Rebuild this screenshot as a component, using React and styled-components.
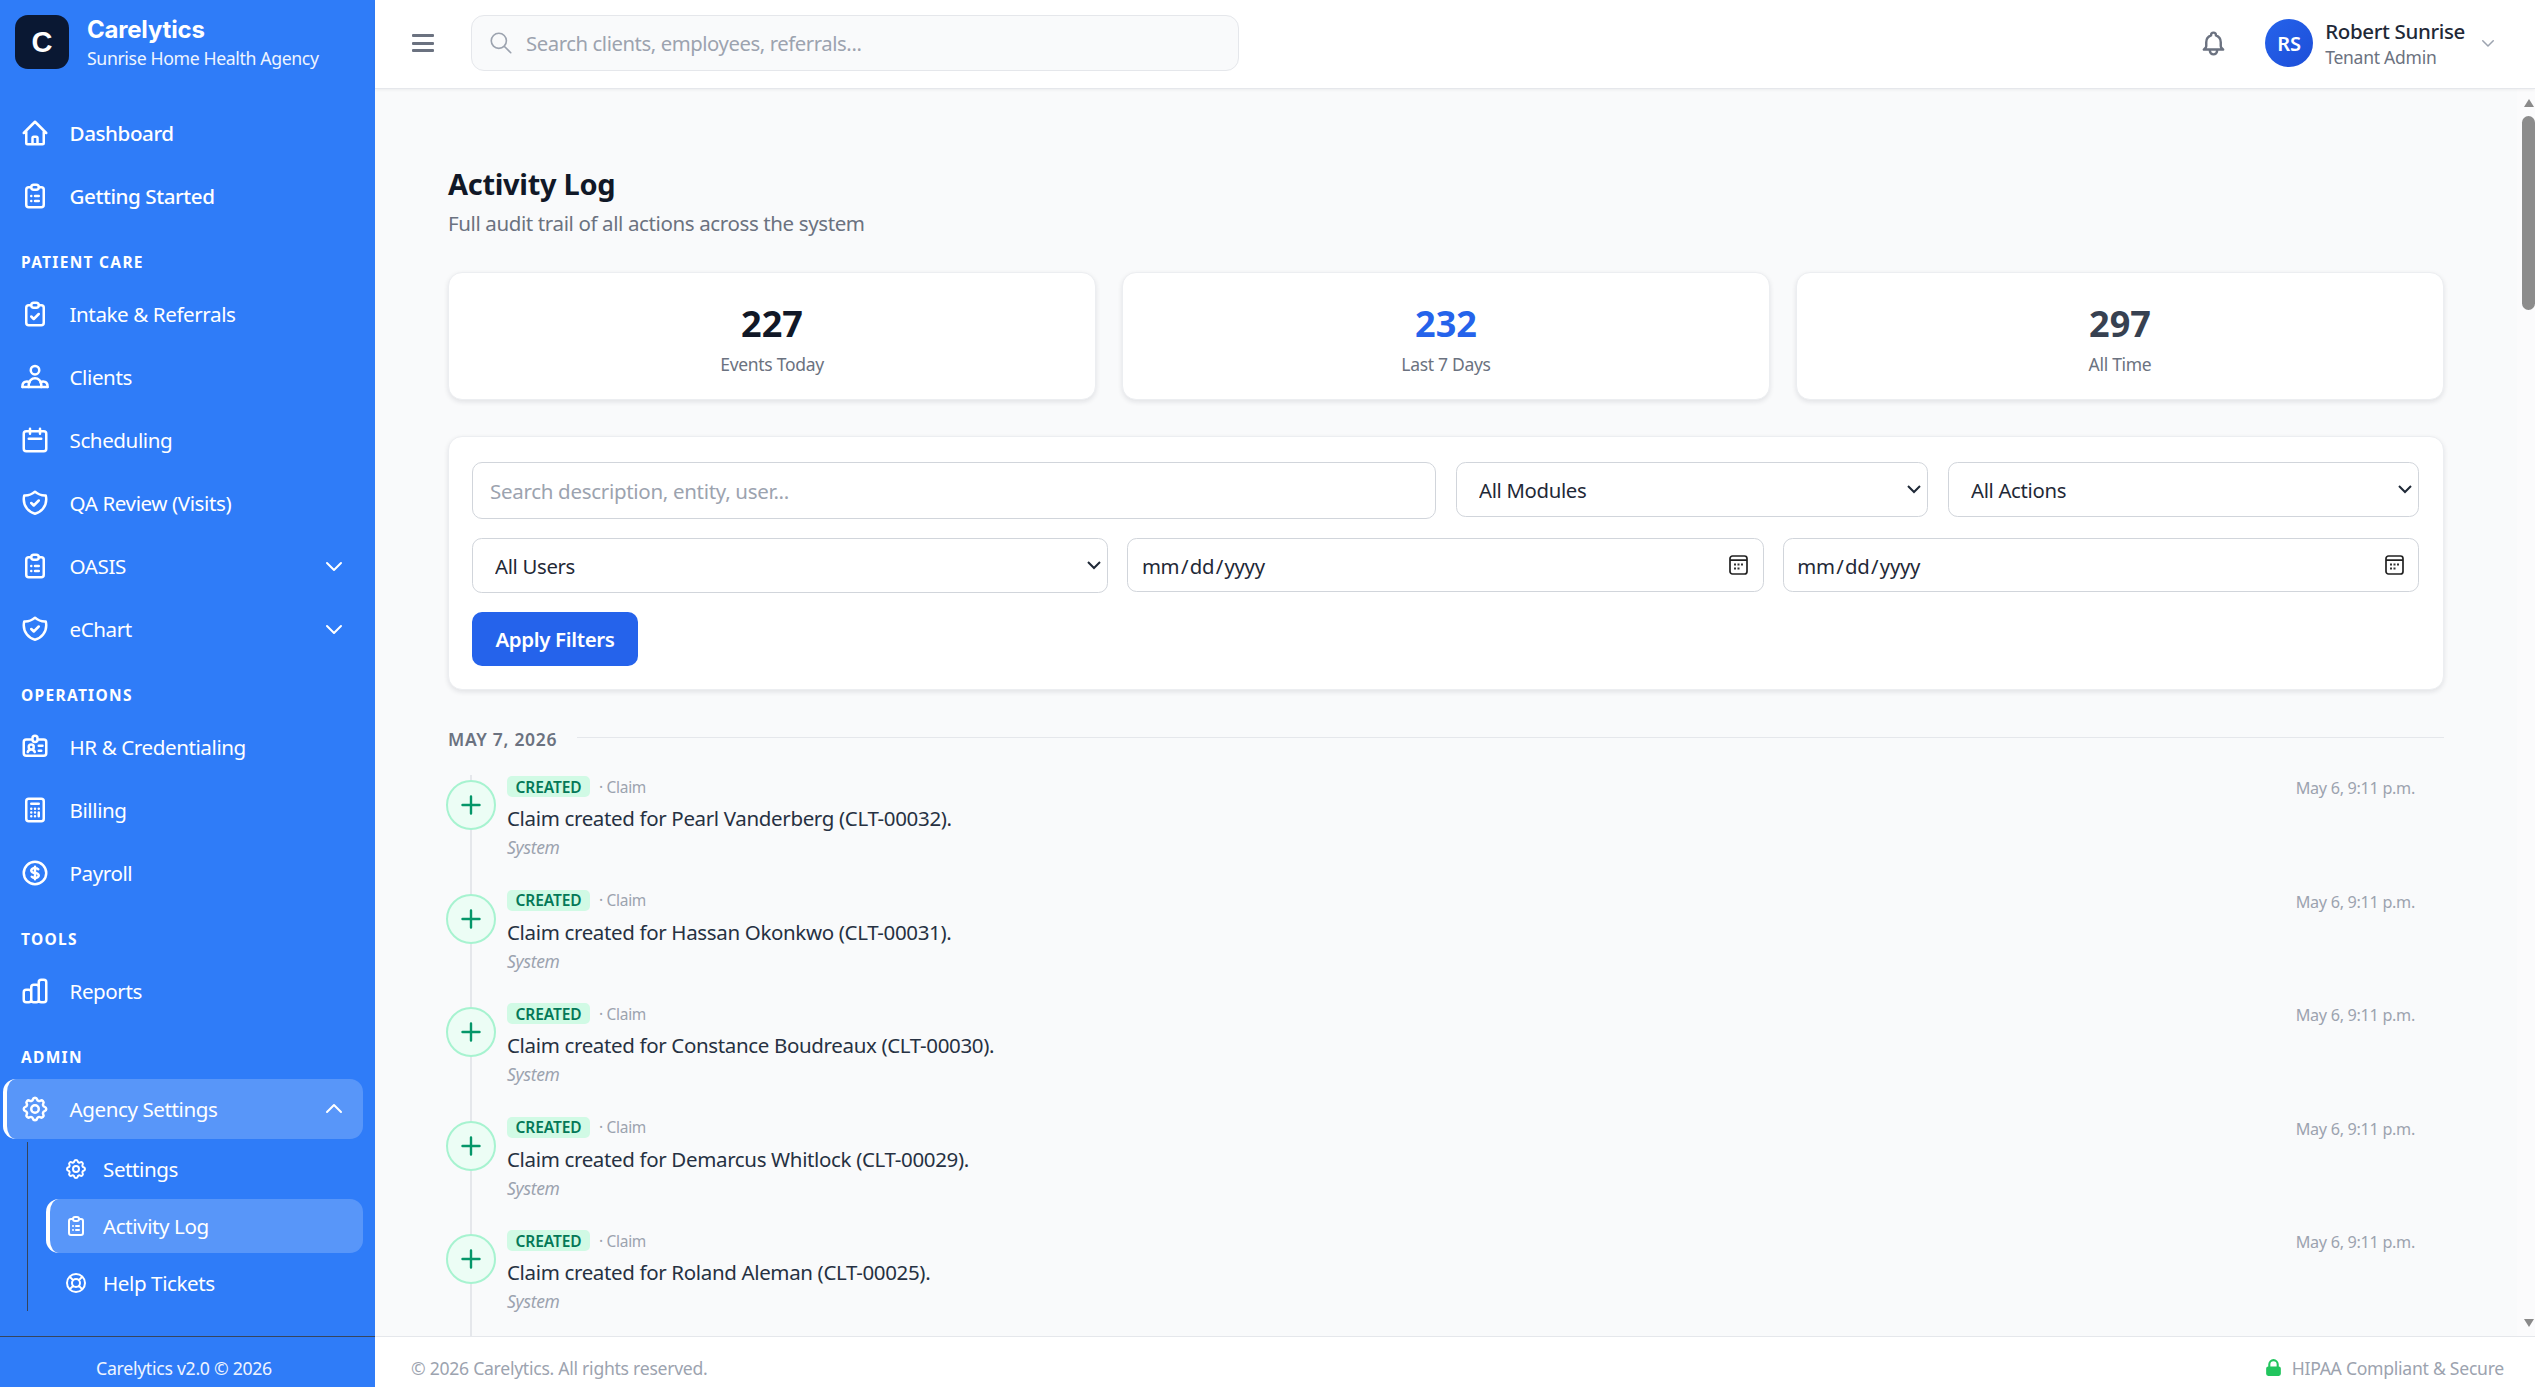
import styled, { createGlobalStyle } from "styled-components";
import {
  HiOutlineBell,
  HiOutlineCalculator,
  HiOutlineCalendar,
  HiOutlineChartBar,
  HiOutlineChevronDown,
  HiOutlineChevronUp,
  HiOutlineClipboardCheck,
  HiOutlineClipboardList,
  HiOutlineCog,
  HiOutlineCurrencyDollar,
  HiOutlineHome,
  HiOutlineIdentification,
  HiOutlineSearch,
  HiOutlineShieldCheck,
  HiOutlineSupport,
  HiLockClosed,
} from "react-icons/hi";

const calendarGlyph =
  "data:image/svg+xml,%3Csvg xmlns='http://www.w3.org/2000/svg' viewBox='0 0 19 20'%3E%3Crect x='1' y='1' width='17' height='18' rx='2.5' fill='none' stroke='%23222' stroke-width='1.7'/%3E%3Cpath d='M1 5.2h17' stroke='%23222' stroke-width='1.7'/%3E%3Cg fill='%23333'%3E%3Crect x='5' y='8.5' width='2' height='2'/%3E%3Crect x='8.5' y='8.5' width='2' height='2'/%3E%3Crect x='12' y='8.5' width='2' height='2'/%3E%3Crect x='5' y='12.5' width='2' height='2'/%3E%3Crect x='8.5' y='12.5' width='2' height='2'/%3E%3C/g%3E%3C/svg%3E";

const GlobalStyle = createGlobalStyle`
  html, body {
    margin: 0;
    height: 100%;
    overflow: hidden;
    background: #f9fafb;
    font-family: "Noto Sans", "Open Sans", sans-serif;
  }
  * { box-sizing: border-box; }
`;

const Shell = styled.div`
  display: flex;
  width: 2535px;
  height: 1387px;
  overflow: hidden;
`;

const Sidebar = styled.aside`
  width: 375px;
  flex: none;
  display: flex;
  flex-direction: column;
  background: #2f7cf8;
  color: #fff;
`;

const Brand = styled.div`
  height: 89px;
  flex: none;
  display: flex;
  align-items: flex-start;
  gap: 18px;
  padding: 15px 0 0 15px;
`;

const LogoMark = styled.div`
  width: 54px;
  height: 54px;
  border-radius: 13px;
  background: #0a1833;
  display: flex;
  align-items: center;
  justify-content: center;
  font: 700 29px "Liberation Sans", sans-serif;
`;

const BrandName = styled.div`
  font: 700 24px/30px "Inter", sans-serif;
  letter-spacing: -0.2px;
`;

const BrandSub = styled.div`
  font-size: 17.7px;
  line-height: 26px;
  letter-spacing: -0.38px;
  color: #eef4ff;
`;

const Nav = styled.nav`
  flex: 1;
  padding-top: 14px;
`;

const NavItem = styled.div`
  height: 60px;
  width: 360px;
  margin: 0 0 3px 3px;
  padding-left: 13px;
  display: flex;
  align-items: center;
  gap: 19.5px;
  border-radius: 13px;
  border-left: 4px solid ${(p) => (p.$active ? "#fff" : "transparent")};
  background: ${(p) => (p.$active ? "rgba(255,255,255,0.2)" : "transparent")};
  font-size: 20.6px;
  font-weight: ${(p) => (p.$strong ? 500 : 400)};
  letter-spacing: -0.42px;
  svg { flex: none; }
`;

const NavLabel = styled.span`
  flex: 1;
`;

const Chevron = styled.span`
  display: flex;
  margin-right: 17px;
`;

const SectionTitle = styled.div`
  height: 55px;
  padding: 23px 0 0 21px;
  font-size: 15.5px;
  line-height: 20px;
  font-weight: 700;
  letter-spacing: 1.3px;
`;

const SubList = styled.div`
  margin-left: 27px;
  padding-left: 18px;
  height: 169px;
  border-left: 1.5px solid #33445f;
`;

const SubItem = styled(NavItem)`
  width: 317px;
  height: 54px;
  margin-left: 0;
  padding-left: 14px;
  gap: 15px;
`;

const SideFooter = styled.div`
  height: 51px;
  flex: none;
  display: flex;
  align-items: center;
  justify-content: center;
  padding: 11px 7px 0 0;
  border-top: 1.5px solid #36465f;
  font-size: 17.7px;
  letter-spacing: -0.3px;
  color: #eef4ff;
`;

const MainColumn = styled.div`
  flex: 1;
  min-width: 0;
  display: flex;
  flex-direction: column;
`;

const Topbar = styled.header`
  height: 89px;
  flex: none;
  display: flex;
  align-items: center;
  padding-bottom: 2px;
  background: #fff;
  border-bottom: 1px solid #e5e7eb;
  box-shadow: 0 1px 3px rgba(0, 0, 0, 0.06);
  position: relative;
  z-index: 1;
`;

const MenuButton = styled.div`
  width: 22px;
  height: 18px;
  margin: 0 38px 0 37px;
  display: flex;
  flex-direction: column;
  justify-content: space-between;
  span {
    height: 3px;
    background: #6b7280;
    border-radius: 1px;
  }
`;

const GlobalSearch = styled.div`
  width: 768px;
  height: 56px;
  margin-left: -1px;
  display: flex;
  align-items: center;
  gap: 12px;
  padding-left: 16px;
  background: #f9fafb;
  border: 1.5px solid #e5e7eb;
  border-radius: 13px;
  color: #9ca3af;
  font-size: 20.3px;
  letter-spacing: -0.42px;
`;

const TopRight = styled.div`
  margin-left: auto;
  display: flex;
  align-items: center;
  padding-right: 38px;
  color: #6b7280;
`;

const Avatar = styled.div`
  width: 48px;
  height: 48px;
  margin: 0 12px 0 37px;
  border-radius: 50%;
  display: flex;
  align-items: center;
  justify-content: center;
  background: linear-gradient(135deg, #2563eb, #1d4ed8);
  color: #fff;
  font-size: 20px;
  font-weight: 600;
`;

const UserBlock = styled.div`
  margin-right: 14px;
`;

const UserName = styled.div`
  font-size: 20.5px;
  line-height: 27px;
  font-weight: 500;
  letter-spacing: -0.35px;
  color: #1f2937;
`;

const UserRole = styled.div`
  font-size: 17.5px;
  line-height: 24px;
  letter-spacing: -0.25px;
  color: #6b7280;
`;

const ContentRow = styled.div`
  flex: 1;
  min-height: 0;
  display: flex;
`;

const Content = styled.main`
  flex: 1;
  min-width: 0;
  overflow: hidden;
  padding: 72px 73px 0 73px;
`;

const ScrollTrack = styled.div`
  width: 18px;
  flex: none;
  display: flex;
  flex-direction: column;
  align-items: flex-end;
  padding-top: 10px;
  background: #fbfbfc;
`;

const ScrollArrow = styled.div`
  width: 0;
  height: 0;
  margin-right: 1px;
  border-left: 5.5px solid transparent;
  border-right: 5.5px solid transparent;
  ${(p) => (p.$down ? "border-top: 8px solid #8a8a8a;" : "border-bottom: 8px solid #8a8a8a;")}
  ${(p) => p.$down && "margin-top: auto; margin-bottom: 9px;"}
`;

const ScrollThumb = styled.div`
  width: 13px;
  height: 194px;
  margin-top: 9px;
  border-radius: 7px;
  background: #8c8c8c;
`;

const PageTitle = styled.h1`
  margin: 0;
  font-size: 29px;
  line-height: 46px;
  font-weight: 700;
  letter-spacing: -0.3px;
  color: #111827;
`;

const PageSub = styled.p`
  margin: 1px 0 34px;
  font-size: 20.5px;
  line-height: 30px;
  letter-spacing: -0.38px;
  color: #6b7280;
`;

const StatGrid = styled.div`
  display: grid;
  grid-template-columns: repeat(3, 1fr);
  gap: 26px;
  margin-bottom: 36px;
`;

const Card = styled.div`
  background: #fff;
  border: 1px solid #eceef1;
  border-radius: 14px;
  box-shadow: 0 2px 5px rgba(17, 24, 39, 0.1);
`;

const StatCard = styled(Card)`
  height: 128px;
  padding-top: 26px;
  text-align: center;
`;

const StatValue = styled.div`
  font-size: 36px;
  line-height: 50px;
  font-weight: 700;
  color: ${(p) => p.$color};
`;

const StatLabel = styled.div`
  margin-top: 2px;
  font-size: 17.5px;
  line-height: 26px;
  letter-spacing: -0.3px;
  color: #6b7280;
`;

const FilterCard = styled(Card)`
  height: 254px;
  padding: 25px 24px 0 23px;
  margin-bottom: 37px;
`;

const FilterTop = styled.div`
  display: grid;
  grid-template-columns: 964fr 472fr 471fr;
  gap: 20px;
  align-items: start;
  margin-bottom: 19px;
`;

const FilterBottom = styled.div`
  display: grid;
  grid-template-columns: repeat(3, 1fr);
  gap: 19px;
  align-items: start;
  margin-bottom: 19px;
`;

const TextInput = styled.input`
  width: 100%;
  height: 57px;
  padding: 0 17px;
  background: #fff;
  border: 1.5px solid #d1d5db;
  border-radius: 10px;
  outline: none;
  font-family: inherit;
  font-size: 20.5px;
  letter-spacing: -0.3px;
  &::placeholder { color: #9ca3af; opacity: 1; }
`;

const Select = styled.select`
  zoom: 1.6;
  display: block;
  width: 100%;
  height: 34.5px;
  padding: 0 5px 0 10px;
  background: #fff;
  border: 1px solid #d1d5db;
  border-radius: 6px;
  outline: none;
  font-family: inherit;
  font-size: 12.7px;
  letter-spacing: -0.2px;
  color: #1f2937;
`;

const DateInput = styled.input`
  zoom: 1.6;
  display: block;
  width: 100%;
  height: 34px;
  padding: 1px 9px 0 7.5px;
  background: #fff;
  border: 1px solid #d1d5db;
  border-radius: 6px;
  outline: none;
  font-family: inherit;
  font-size: 12.7px;
  letter-spacing: -0.2px;
  color: #1f2937;
  &::-webkit-calendar-picker-indicator {
    width: 12px;
    height: 12.5px;
    margin: 0 0 1px;
    padding: 0;
    background: url("${calendarGlyph}") center / contain no-repeat;
  }
`;

const ApplyButton = styled.button`
  width: 166px;
  height: 54px;
  border: 0;
  border-radius: 10px;
  background: #2563eb;
  color: #fff;
  font-family: inherit;
  font-size: 20.5px;
  font-weight: 600;
  letter-spacing: -0.35px;
`;

const DateHeader = styled.div`
  display: flex;
  align-items: center;
  gap: 20px;
  height: 24px;
  margin-bottom: 25px;
  font-size: 17.5px;
  font-weight: 600;
  letter-spacing: 0.7px;
  color: #6b7280;
  &::after {
    content: "";
    flex: 1;
    height: 1.5px;
    margin-top: -3px;
    background: #e5e7eb;
  }
`;

const Timeline = styled.div`
  position: relative;
  margin-left: -2px;
  &::before {
    content: "";
    position: absolute;
    left: 24px;
    top: -1px;
    bottom: 0;
    width: 2px;
    background: #e5e7eb;
  }
`;

const LogRow = styled.div`
  position: relative;
  height: 113.5px;
  display: grid;
  grid-template-columns: 50px 1fr auto;
  column-gap: 11px;
  padding-right: 29px;
`;

const LogIcon = styled.div`
  width: 50px;
  height: 50px;
  margin-top: 4px;
  border-radius: 50%;
  display: flex;
  align-items: center;
  justify-content: center;
  background: #ecfdf5;
  border: 2px solid #a7f3d0;
  color: #059669;
`;

const MetaLine = styled.div`
  display: flex;
  align-items: center;
  gap: 9px;
  height: 21px;
`;

const Badge = styled.span`
  width: 83px;
  height: 21px;
  border-radius: 5px;
  display: flex;
  align-items: center;
  justify-content: center;
  background: #d1fae5;
  color: #047857;
  font-size: 15.5px;
  font-weight: 600;
  letter-spacing: -0.1px;
`;

const EntityType = styled.span`
  font-size: 15.5px;
  letter-spacing: -0.3px;
  color: #9ca3af;
`;

const Description = styled.div`
  margin-top: 5px;
  font-size: 20.5px;
  line-height: 32px;
  letter-spacing: -0.35px;
  color: #263142;
`;

const Actor = styled.div`
  margin-top: 0;
  font-size: 17.5px;
  line-height: 26px;
  font-style: italic;
  letter-spacing: -0.3px;
  color: #9ca3af;
`;

const LogTime = styled.div`
  padding-top: 1px;
  font-size: 16.2px;
  line-height: 22px;
  letter-spacing: -0.3px;
  color: #9ca3af;
`;

const PageFooter = styled.footer`
  height: 51px;
  flex: none;
  display: flex;
  align-items: center;
  justify-content: space-between;
  padding: 11px 31px 0 36px;
  background: #fff;
  border-top: 1.5px solid #e5e7eb;
  font-size: 17.6px;
  letter-spacing: -0.27px;
  color: #9ca3af;
`;

const Compliance = styled.div`
  display: flex;
  align-items: center;
  gap: 8px;
  svg { color: #22c55e; }
`;

const ClientsIcon = ({ size }) => (
  <svg width={size} height={size} viewBox="0 0 24 24" fill="none" stroke="currentColor" strokeWidth="2" strokeLinejoin="round" strokeLinecap="round">
    <circle cx="12" cy="6.5" r="3.4" />
    <path d="M7 20v-2a5 5 0 0 1 10 0v2" />
    <path d="M2 20v-1a3.4 3.4 0 0 1 5.6-2.6M22 20v-1a3.4 3.4 0 0 0-5.6-2.6" />
    <path d="M2 20h20" />
  </svg>
);

const PlusIcon = () => (
  <svg width="22" height="22" viewBox="0 0 22 22" fill="none" stroke="currentColor" strokeWidth="2.4" strokeLinecap="round">
    <path d="M11 2.5v17M2.5 11h17" />
  </svg>
);

const sections = [
  {
    items: [
      { label: "Dashboard", icon: HiOutlineHome, strong: true },
      { label: "Getting Started", icon: HiOutlineClipboardList, strong: true },
    ],
  },
  {
    title: "PATIENT CARE",
    items: [
      { label: "Intake & Referrals", icon: HiOutlineClipboardCheck },
      { label: "Clients", icon: ClientsIcon },
      { label: "Scheduling", icon: HiOutlineCalendar },
      { label: "QA Review (Visits)", icon: HiOutlineShieldCheck },
      { label: "OASIS", icon: HiOutlineClipboardList, chevron: true },
      { label: "eChart", icon: HiOutlineShieldCheck, chevron: true },
    ],
  },
  {
    title: "OPERATIONS",
    items: [
      { label: "HR & Credentialing", icon: HiOutlineIdentification },
      { label: "Billing", icon: HiOutlineCalculator },
      { label: "Payroll", icon: HiOutlineCurrencyDollar },
    ],
  },
  {
    title: "TOOLS",
    items: [{ label: "Reports", icon: HiOutlineChartBar }],
  },
];

const logEntries = [
  "Claim created for Pearl Vanderberg (CLT-00032).",
  "Claim created for Hassan Okonkwo (CLT-00031).",
  "Claim created for Constance Boudreaux (CLT-00030).",
  "Claim created for Demarcus Whitlock (CLT-00029).",
  "Claim created for Roland Aleman (CLT-00025).",
];

const App = () => {
  return (
    <Shell>
      <GlobalStyle />
      <Sidebar>
        <Brand>
          <LogoMark>C</LogoMark>
          <div>
            <BrandName>Carelytics</BrandName>
            <BrandSub>Sunrise Home Health Agency</BrandSub>
          </div>
        </Brand>
        <Nav>
          {sections.map((section, i) => (
            <div key={i}>
              {section.title && <SectionTitle>{section.title}</SectionTitle>}
              {section.items.map((item) => (
                <NavItem key={item.label} $strong={item.strong}>
                  <item.icon size={30} />
                  <NavLabel>{item.label}</NavLabel>
                  {item.chevron && (
                    <Chevron>
                      <HiOutlineChevronDown size={24} />
                    </Chevron>
                  )}
                </NavItem>
              ))}
            </div>
          ))}
          <SectionTitle>ADMIN</SectionTitle>
          <NavItem $active>
            <HiOutlineCog size={30} />
            <NavLabel>Agency Settings</NavLabel>
            <Chevron>
              <HiOutlineChevronUp size={24} />
            </Chevron>
          </NavItem>
          <SubList>
            <SubItem>
              <HiOutlineCog size={24} />
              <span>Settings</span>
            </SubItem>
            <SubItem $active>
              <HiOutlineClipboardList size={24} />
              <span>Activity Log</span>
            </SubItem>
            <SubItem>
              <HiOutlineSupport size={24} />
              <span>Help Tickets</span>
            </SubItem>
          </SubList>
        </Nav>
        <SideFooter>Carelytics v2.0 © 2026</SideFooter>
      </Sidebar>

      <MainColumn>
        <Topbar>
          <MenuButton>
            <span />
            <span />
            <span />
          </MenuButton>
          <GlobalSearch>
            <HiOutlineSearch size={26} strokeWidth={1.5} />
            Search clients, employees, referrals...
          </GlobalSearch>
          <TopRight>
            <HiOutlineBell size={29} />
            <Avatar>RS</Avatar>
            <UserBlock>
              <UserName>Robert Sunrise</UserName>
              <UserRole>Tenant Admin</UserRole>
            </UserBlock>
            <HiOutlineChevronDown size={18} color="#9ca3af" />
          </TopRight>
        </Topbar>

        <ContentRow>
          <Content>
            <PageTitle>Activity Log</PageTitle>
            <PageSub>Full audit trail of all actions across the system</PageSub>
            <StatGrid>
              <StatCard>
                <StatValue $color="#111827">227</StatValue>
                <StatLabel>Events Today</StatLabel>
              </StatCard>
              <StatCard>
                <StatValue $color="#2563eb">232</StatValue>
                <StatLabel>Last 7 Days</StatLabel>
              </StatCard>
              <StatCard>
                <StatValue $color="#374151">297</StatValue>
                <StatLabel>All Time</StatLabel>
              </StatCard>
            </StatGrid>
            <FilterCard>
              <FilterTop>
                <TextInput placeholder="Search description, entity, user..." />
                <Select>
                  <option>All Modules</option>
                </Select>
                <Select>
                  <option>All Actions</option>
                </Select>
              </FilterTop>
              <FilterBottom>
                <Select>
                  <option>All Users</option>
                </Select>
                <DateInput type="date" />
                <DateInput type="date" />
              </FilterBottom>
              <ApplyButton>Apply Filters</ApplyButton>
            </FilterCard>
            <DateHeader>MAY 7, 2026</DateHeader>
            <Timeline>
              {logEntries.map((text) => (
                <LogRow key={text}>
                  <LogIcon>
                    <PlusIcon />
                  </LogIcon>
                  <div>
                    <MetaLine>
                      <Badge>CREATED</Badge>
                      <EntityType>· Claim</EntityType>
                    </MetaLine>
                    <Description>{text}</Description>
                    <Actor>System</Actor>
                  </div>
                  <LogTime>May 6, 9:11 p.m.</LogTime>
                </LogRow>
              ))}
            </Timeline>
          </Content>
          <ScrollTrack>
            <ScrollArrow />
            <ScrollThumb />
            <ScrollArrow $down />
          </ScrollTrack>
        </ContentRow>

        <PageFooter>
          <span>© 2026 Carelytics. All rights reserved.</span>
          <Compliance>
            <HiLockClosed size={21} />
            HIPAA Compliant &amp; Secure
          </Compliance>
        </PageFooter>
      </MainColumn>
    </Shell>
  );
};

export default App;
